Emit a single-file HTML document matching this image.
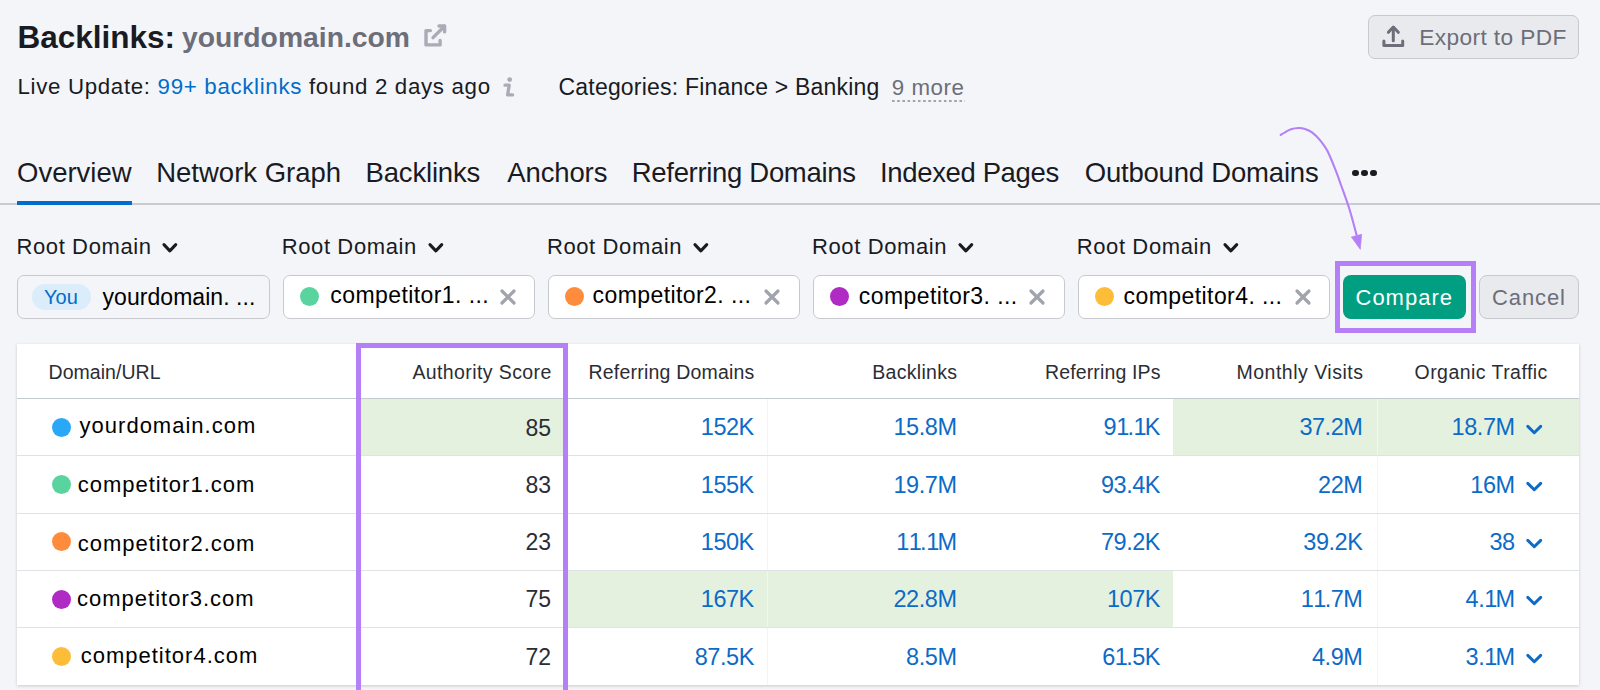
<!DOCTYPE html>
<html><head><meta charset="utf-8"><style>
html,body{margin:0;padding:0}
body{width:1600px;height:690px;overflow:hidden;position:relative;background:#f4f5f9;font-family:"Liberation Sans",sans-serif}
.t{position:absolute;line-height:1;white-space:nowrap}
</style></head><body>
<div class="t" style="left:17.50px;top:22.23px;font-size:31.5px;color:#191b23;font-weight:700;letter-spacing:0px;">Backlinks:</div>
<div class="t" style="left:182.00px;top:23.14px;font-size:28.3px;color:#6c6e79;font-weight:700;letter-spacing:0px;">yourdomain.com</div>
<svg style="position:absolute;left:424px;top:24px;overflow:visible" width="24" height="24" viewBox="0 0 24 24"><g fill="none" stroke="#a9abb6" stroke-width="3.4" stroke-linecap="round" stroke-linejoin="round"><path d="M6.4 6.6H2V20.9H16.1V16.5"/><path d="M9 13.6L20.4 2.2"/><path d="M15 2H20.6V7.9"/></g></svg>
<div class="t" style="left:17.50px;top:76.42px;font-size:22.3px;color:#191b23;font-weight:400;letter-spacing:0.67px;">Live Update: <span style="color:#006dca">99+ backlinks</span> found 2 days ago</div>
<svg style="position:absolute;left:500px;top:76px;overflow:visible" width="16" height="22" viewBox="0 0 16 22"><circle cx="9.7" cy="3.6" r="2.4" fill="#a9abb6"/><path d="M5 9.2H9.2L7.6 18.9H12.6" fill="none" stroke="#a9abb6" stroke-width="3.3" stroke-linecap="round" stroke-linejoin="round"/></svg>
<div class="t" style="left:558.50px;top:76.23px;font-size:23px;color:#191b23;font-weight:400;letter-spacing:0.2px;">Categories: Finance &gt; Banking</div>
<div class="t" style="left:891.80px;top:76.82px;font-size:22.3px;color:#6c6e79;font-weight:400;letter-spacing:0.55px;">9 more</div>
<div style="position:absolute;left:892px;top:100px;width:73px;height:1.5999999999999943px;background-image:linear-gradient(90deg,#6c6e79 48%,transparent 48%);background-size:5.2px 1.6px;background-repeat:repeat-x;opacity:.6"></div>
<div style="position:absolute;left:1368px;top:14.5px;width:211px;height:44.5px;box-sizing:border-box;border:1px solid #c7c9cf;border-radius:7px;background:#e9eaee"></div>
<svg style="position:absolute;left:1380px;top:22px;overflow:visible" width="26" height="26" viewBox="0 0 26 26"><g fill="none" stroke="#6c6e79" stroke-width="3" stroke-linecap="round" stroke-linejoin="round"><path d="M3.9 19V23.4H22.7V19"/><path d="M13.3 18.8V5.5"/><path d="M8.4 10.3L13.3 5L18.3 10.3"/></g></svg>
<div class="t" style="left:1419.30px;top:26.18px;font-size:22.7px;color:#6c6e79;font-weight:400;letter-spacing:0.38px;">Export to PDF</div>
<div class="t" style="left:17.00px;top:159.12px;font-size:27.5px;color:#191b23;font-weight:400;letter-spacing:0px;">Overview</div>
<div class="t" style="left:156.20px;top:159.12px;font-size:27.5px;color:#191b23;font-weight:400;letter-spacing:0px;">Network Graph</div>
<div class="t" style="left:365.60px;top:159.12px;font-size:27.5px;color:#191b23;font-weight:400;letter-spacing:-0.18px;">Backlinks</div>
<div class="t" style="left:507.30px;top:159.12px;font-size:27.5px;color:#191b23;font-weight:400;letter-spacing:-0.13px;">Anchors</div>
<div class="t" style="left:631.80px;top:159.12px;font-size:27.5px;color:#191b23;font-weight:400;letter-spacing:-0.32px;">Referring Domains</div>
<div class="t" style="left:880.10px;top:159.12px;font-size:27.5px;color:#191b23;font-weight:400;letter-spacing:-0.37px;">Indexed Pages</div>
<div class="t" style="left:1084.70px;top:159.12px;font-size:27.5px;color:#191b23;font-weight:400;letter-spacing:-0.2px;">Outbound Domains</div>
<div style="position:absolute;left:1352.3px;top:169.70000000000002px;width:6.4px;height:6.4px;border-radius:50%;background:#191b23"></div>
<div style="position:absolute;left:1361.3px;top:169.70000000000002px;width:6.4px;height:6.4px;border-radius:50%;background:#191b23"></div>
<div style="position:absolute;left:1370.3px;top:169.70000000000002px;width:6.4px;height:6.4px;border-radius:50%;background:#191b23"></div>
<div style="position:absolute;left:0px;top:203px;width:1600px;height:2px;background:#c9cbd1"></div>
<div style="position:absolute;left:17px;top:201px;width:115px;height:4px;background:#006dca"></div>
<div class="t" style="left:16.45px;top:236.07px;font-size:22px;color:#191b23;font-weight:400;letter-spacing:0.62px;">Root Domain</div>
<svg style="position:absolute;left:162.25px;top:240px;overflow:visible" width="16" height="14" viewBox="0 0 16 14"><path d="M1.95 4.6L7.85 10.9L13.75 4.6" fill="none" stroke="#191b23" stroke-width="3" stroke-linecap="round" stroke-linejoin="round"/></svg>
<div class="t" style="left:281.70px;top:236.07px;font-size:22px;color:#191b23;font-weight:400;letter-spacing:0.62px;">Root Domain</div>
<svg style="position:absolute;left:427.5px;top:240px;overflow:visible" width="16" height="14" viewBox="0 0 16 14"><path d="M1.95 4.6L7.85 10.9L13.75 4.6" fill="none" stroke="#191b23" stroke-width="3" stroke-linecap="round" stroke-linejoin="round"/></svg>
<div class="t" style="left:546.90px;top:236.07px;font-size:22px;color:#191b23;font-weight:400;letter-spacing:0.62px;">Root Domain</div>
<svg style="position:absolute;left:692.7px;top:240px;overflow:visible" width="16" height="14" viewBox="0 0 16 14"><path d="M1.95 4.6L7.85 10.9L13.75 4.6" fill="none" stroke="#191b23" stroke-width="3" stroke-linecap="round" stroke-linejoin="round"/></svg>
<div class="t" style="left:812.00px;top:236.07px;font-size:22px;color:#191b23;font-weight:400;letter-spacing:0.62px;">Root Domain</div>
<svg style="position:absolute;left:957.8px;top:240px;overflow:visible" width="16" height="14" viewBox="0 0 16 14"><path d="M1.95 4.6L7.85 10.9L13.75 4.6" fill="none" stroke="#191b23" stroke-width="3" stroke-linecap="round" stroke-linejoin="round"/></svg>
<div class="t" style="left:1076.70px;top:236.07px;font-size:22px;color:#191b23;font-weight:400;letter-spacing:0.62px;">Root Domain</div>
<svg style="position:absolute;left:1222.5px;top:240px;overflow:visible" width="16" height="14" viewBox="0 0 16 14"><path d="M1.95 4.6L7.85 10.9L13.75 4.6" fill="none" stroke="#191b23" stroke-width="3" stroke-linecap="round" stroke-linejoin="round"/></svg>
<div style="position:absolute;left:17.25px;top:275px;width:252.35000000000002px;height:43.5px;box-sizing:border-box;border:1px solid #c7c9cf;border-radius:7px;background:#f4f5f9"></div>
<div style="position:absolute;left:32px;top:284.2px;width:59px;height:25.400000000000034px;border-radius:13px;background:#dbecfb"></div>
<div class="t" style="left:44.00px;top:287.32px;font-size:20px;color:#006dca;font-weight:400;letter-spacing:0px;">You</div>
<div class="t" style="left:102.50px;top:286.23px;font-size:23px;color:#000;font-weight:400;letter-spacing:0.05px;">yourdomain. ...</div>
<div style="position:absolute;left:282.5px;top:275px;width:252.5px;height:43.5px;box-sizing:border-box;border:1px solid #c7c9cf;border-radius:7px;background:#fff"></div>
<div style="position:absolute;left:299.9px;top:287.4px;width:19.100000000000023px;height:19.100000000000023px;border-radius:50%;background:#5ad49e"></div>
<div class="t" style="left:330.30px;top:283.83px;font-size:23px;color:#000;font-weight:400;letter-spacing:0.42px;">competitor1. ...</div>
<svg style="position:absolute;left:500px;top:289px;overflow:visible" width="16" height="16" viewBox="0 0 16 16"><path d="M2 2L14 14M14 2L2 14" stroke="#a1a3ad" stroke-width="3.2" stroke-linecap="round"/></svg>
<div style="position:absolute;left:547.7px;top:275px;width:252.5px;height:43.5px;box-sizing:border-box;border:1px solid #c7c9cf;border-radius:7px;background:#fff"></div>
<div style="position:absolute;left:564.7px;top:287.4px;width:19.100000000000023px;height:19.100000000000023px;border-radius:50%;background:#ff8b3d"></div>
<div class="t" style="left:592.50px;top:283.83px;font-size:23px;color:#000;font-weight:400;letter-spacing:0.42px;">competitor2. ...</div>
<svg style="position:absolute;left:764.4px;top:289px;overflow:visible" width="16" height="16" viewBox="0 0 16 16"><path d="M2 2L14 14M14 2L2 14" stroke="#a1a3ad" stroke-width="3.2" stroke-linecap="round"/></svg>
<div style="position:absolute;left:812.8px;top:275px;width:252.5px;height:43.5px;box-sizing:border-box;border:1px solid #c7c9cf;border-radius:7px;background:#fff"></div>
<div style="position:absolute;left:829.6px;top:287.4px;width:19.100000000000023px;height:19.100000000000023px;border-radius:50%;background:#b02ac4"></div>
<div class="t" style="left:858.80px;top:285.13px;font-size:23px;color:#000;font-weight:400;letter-spacing:0.42px;">competitor3. ...</div>
<svg style="position:absolute;left:1029.3px;top:289px;overflow:visible" width="16" height="16" viewBox="0 0 16 16"><path d="M2 2L14 14M14 2L2 14" stroke="#a1a3ad" stroke-width="3.2" stroke-linecap="round"/></svg>
<div style="position:absolute;left:1077.5px;top:275px;width:252.5px;height:43.5px;box-sizing:border-box;border:1px solid #c7c9cf;border-radius:7px;background:#fff"></div>
<div style="position:absolute;left:1094.6px;top:287.4px;width:19.09999999999991px;height:19.100000000000023px;border-radius:50%;background:#fdbd38"></div>
<div class="t" style="left:1123.60px;top:284.83px;font-size:23px;color:#000;font-weight:400;letter-spacing:0.42px;">competitor4. ...</div>
<svg style="position:absolute;left:1294.8px;top:289px;overflow:visible" width="16" height="16" viewBox="0 0 16 16"><path d="M2 2L14 14M14 2L2 14" stroke="#a1a3ad" stroke-width="3.2" stroke-linecap="round"/></svg>
<div style="position:absolute;left:1342.5px;top:275px;width:123.5px;height:44px;border-radius:8px;background:#009f81"></div>
<div class="t" style="left:1355.50px;top:286.67px;font-size:22px;color:#fff;font-weight:400;letter-spacing:1.0px;">Compare</div>
<div style="position:absolute;left:1478.7px;top:275px;width:100.29999999999995px;height:44px;box-sizing:border-box;border:1px solid #c7c9cf;border-radius:8px;background:#e9eaee"></div>
<div class="t" style="left:1492.00px;top:286.67px;font-size:22px;color:#6c6e79;font-weight:400;letter-spacing:0.9px;">Cancel</div>
<div style="position:absolute;left:1334.9px;top:260.9px;width:141.19999999999982px;height:71.70000000000005px;box-sizing:border-box;border:5px solid #b57ff7"></div>
<svg style="position:absolute;left:1270px;top:120px;overflow:visible" width="100" height="140" viewBox="0 0 100 140"><path d="M10.65 15.00C11.38 14.55 13.28 13.25 15.00 12.30C16.72 11.35 18.75 10.02 21.00 9.30C23.25 8.58 26.17 8.07 28.50 8.00C30.83 7.93 32.75 8.17 35.00 8.90C37.25 9.63 39.47 10.50 42.00 12.40C44.53 14.30 47.67 17.27 50.20 20.30C52.73 23.33 54.73 25.87 57.20 30.60C59.67 35.33 62.70 42.97 65.00 48.70C67.30 54.43 68.55 58.12 71.00 65.00C73.45 71.88 77.07 81.50 79.70 90.00C82.33 98.50 85.62 111.67 86.80 116.00" fill="none" stroke="#b57ff7" stroke-width="2.1" stroke-linecap="round"/><path d="M81.3 117L91.7 114.3L90.3 129.4Z" fill="#b57ff7" stroke="#b57ff7" stroke-width="0.6" stroke-linejoin="round"/></svg>
<div style="position:absolute;left:17px;top:344px;width:1562px;height:341px;background:#fff;box-shadow:0 1px 3px rgba(0,0,0,.18)"></div>
<div style="position:absolute;left:357px;top:398.5px;width:211px;height:57.0px;background:#e4f1df"></div>
<div style="position:absolute;left:1173px;top:398.5px;width:406px;height:57.0px;background:#e4f1df"></div>
<div style="position:absolute;left:568px;top:570px;width:605px;height:57.299999999999955px;background:#e4f1df"></div>
<div style="position:absolute;left:767px;top:398.5px;width:1px;height:286.5px;background:#f3f4f5"></div>
<div style="position:absolute;left:1376.5px;top:398.5px;width:1.0px;height:286.5px;background:#f3f4f5"></div>
<div style="position:absolute;left:17px;top:397.5px;width:1562px;height:1.5px;background:#c3cbcf"></div>
<div style="position:absolute;left:17px;top:455px;width:1562px;height:1.3000000000000114px;background:#dfe3e6"></div>
<div style="position:absolute;left:17px;top:512.5px;width:1562px;height:1.2999999999999545px;background:#dfe3e6"></div>
<div style="position:absolute;left:17px;top:570px;width:1562px;height:1.2999999999999545px;background:#dfe3e6"></div>
<div style="position:absolute;left:17px;top:627px;width:1562px;height:1.2999999999999545px;background:#dfe3e6"></div>
<div class="t" style="left:48.50px;top:362.99px;font-size:19.5px;color:#2b2d35;font-weight:400;letter-spacing:0.05px;">Domain/URL</div>
<div class="t" style="right:1048.30px;top:362.99px;font-size:19.5px;color:#2b2d35;font-weight:400;letter-spacing:0.4px;text-align:right;">Authority Score</div>
<div class="t" style="right:845.50px;top:362.99px;font-size:19.5px;color:#2b2d35;font-weight:400;letter-spacing:0.2px;text-align:right;">Referring Domains</div>
<div class="t" style="right:642.70px;top:362.99px;font-size:19.5px;color:#2b2d35;font-weight:400;letter-spacing:0.3px;text-align:right;">Backlinks</div>
<div class="t" style="right:439.35px;top:362.99px;font-size:19.5px;color:#2b2d35;font-weight:400;letter-spacing:0.15px;text-align:right;">Referring IPs</div>
<div class="t" style="right:236.60px;top:362.99px;font-size:19.5px;color:#2b2d35;font-weight:400;letter-spacing:0.5px;text-align:right;">Monthly Visits</div>
<div class="t" style="right:52.25px;top:362.99px;font-size:19.5px;color:#2b2d35;font-weight:400;letter-spacing:0.45px;text-align:right;">Organic Traffic</div>
<div style="position:absolute;left:51.8px;top:417.9px;width:19.400000000000006px;height:19.200000000000045px;border-radius:50%;background:#2aa8f8"></div>
<div class="t" style="left:79.60px;top:415.27px;font-size:22px;color:#000;font-weight:400;letter-spacing:1.0px;">yourdomain.com</div>
<div class="t" style="right:1049.00px;top:416.53px;font-size:23px;color:#2b2d35;font-weight:400;letter-spacing:0px;text-align:right;">85</div>
<div class="t" style="right:846.15px;top:416.40px;font-size:23.5px;color:#0d6bc7;font-weight:400;letter-spacing:-0.45px;text-align:right;">152K</div>
<div class="t" style="right:643.45px;top:416.40px;font-size:23.5px;color:#0d6bc7;font-weight:400;letter-spacing:-0.45px;text-align:right;">15.8M</div>
<div class="t" style="right:439.95px;top:416.40px;font-size:23.5px;color:#0d6bc7;font-weight:400;letter-spacing:-0.45px;text-align:right;">9<span style="letter-spacing:-1.8px">1</span>.<span style="letter-spacing:-1.8px">1</span>K</div>
<div class="t" style="right:237.55px;top:416.40px;font-size:23.5px;color:#0d6bc7;font-weight:400;letter-spacing:-0.45px;text-align:right;">37.2M</div>
<div class="t" style="right:85.35px;top:416.40px;font-size:23.5px;color:#0d6bc7;font-weight:400;letter-spacing:-0.45px;text-align:right;">18.7M</div>
<svg style="position:absolute;left:1526px;top:423.5px;overflow:visible" width="17" height="12" viewBox="0 0 17 12"><path d="M1.8 2.4L8.25 8.7L14.7 2.4" fill="none" stroke="#0d6bc7" stroke-width="3" stroke-linecap="round" stroke-linejoin="round"/></svg>
<div style="position:absolute;left:51.8px;top:475.29999999999995px;width:19.400000000000006px;height:19.200000000000045px;border-radius:50%;background:#5ad49e"></div>
<div class="t" style="left:77.70px;top:474.27px;font-size:22px;color:#000;font-weight:400;letter-spacing:1.0px;">competitor1.com</div>
<div class="t" style="right:1049.00px;top:473.83px;font-size:23px;color:#2b2d35;font-weight:400;letter-spacing:0px;text-align:right;">83</div>
<div class="t" style="right:846.15px;top:473.70px;font-size:23.5px;color:#0d6bc7;font-weight:400;letter-spacing:-0.45px;text-align:right;">155K</div>
<div class="t" style="right:643.45px;top:473.70px;font-size:23.5px;color:#0d6bc7;font-weight:400;letter-spacing:-0.45px;text-align:right;">19.7M</div>
<div class="t" style="right:439.95px;top:473.70px;font-size:23.5px;color:#0d6bc7;font-weight:400;letter-spacing:-0.45px;text-align:right;">93.4K</div>
<div class="t" style="right:237.55px;top:473.70px;font-size:23.5px;color:#0d6bc7;font-weight:400;letter-spacing:-0.45px;text-align:right;">22M</div>
<div class="t" style="right:85.35px;top:473.70px;font-size:23.5px;color:#0d6bc7;font-weight:400;letter-spacing:-0.45px;text-align:right;">16M</div>
<svg style="position:absolute;left:1526px;top:480.8px;overflow:visible" width="17" height="12" viewBox="0 0 17 12"><path d="M1.8 2.4L8.25 8.7L14.7 2.4" fill="none" stroke="#0d6bc7" stroke-width="3" stroke-linecap="round" stroke-linejoin="round"/></svg>
<div style="position:absolute;left:51.8px;top:532.1999999999999px;width:19.400000000000006px;height:19.200000000000045px;border-radius:50%;background:#ff8b3d"></div>
<div class="t" style="left:77.70px;top:532.87px;font-size:22px;color:#000;font-weight:400;letter-spacing:1.0px;">competitor2.com</div>
<div class="t" style="right:1049.00px;top:531.43px;font-size:23px;color:#2b2d35;font-weight:400;letter-spacing:0px;text-align:right;">23</div>
<div class="t" style="right:846.15px;top:531.30px;font-size:23.5px;color:#0d6bc7;font-weight:400;letter-spacing:-0.45px;text-align:right;">150K</div>
<div class="t" style="right:643.45px;top:531.30px;font-size:23.5px;color:#0d6bc7;font-weight:400;letter-spacing:-0.45px;text-align:right;">1<span style="letter-spacing:-1.8px">1</span>.<span style="letter-spacing:-1.8px">1</span>M</div>
<div class="t" style="right:439.95px;top:531.30px;font-size:23.5px;color:#0d6bc7;font-weight:400;letter-spacing:-0.45px;text-align:right;">79.2K</div>
<div class="t" style="right:237.55px;top:531.30px;font-size:23.5px;color:#0d6bc7;font-weight:400;letter-spacing:-0.45px;text-align:right;">39.2K</div>
<div class="t" style="right:85.35px;top:531.30px;font-size:23.5px;color:#0d6bc7;font-weight:400;letter-spacing:-0.45px;text-align:right;">38</div>
<svg style="position:absolute;left:1526px;top:538.4px;overflow:visible" width="17" height="12" viewBox="0 0 17 12"><path d="M1.8 2.4L8.25 8.7L14.7 2.4" fill="none" stroke="#0d6bc7" stroke-width="3" stroke-linecap="round" stroke-linejoin="round"/></svg>
<div style="position:absolute;left:51.8px;top:589.8px;width:19.400000000000006px;height:19.200000000000045px;border-radius:50%;background:#b02ac4"></div>
<div class="t" style="left:77.00px;top:587.97px;font-size:22px;color:#000;font-weight:400;letter-spacing:1.0px;">competitor3.com</div>
<div class="t" style="right:1049.00px;top:587.63px;font-size:23px;color:#2b2d35;font-weight:400;letter-spacing:0px;text-align:right;">75</div>
<div class="t" style="right:846.15px;top:587.50px;font-size:23.5px;color:#0d6bc7;font-weight:400;letter-spacing:-0.45px;text-align:right;">167K</div>
<div class="t" style="right:643.45px;top:587.50px;font-size:23.5px;color:#0d6bc7;font-weight:400;letter-spacing:-0.45px;text-align:right;">22.8M</div>
<div class="t" style="right:439.95px;top:587.50px;font-size:23.5px;color:#0d6bc7;font-weight:400;letter-spacing:-0.45px;text-align:right;">107K</div>
<div class="t" style="right:237.55px;top:587.50px;font-size:23.5px;color:#0d6bc7;font-weight:400;letter-spacing:-0.45px;text-align:right;">1<span style="letter-spacing:-1.8px">1</span>.7M</div>
<div class="t" style="right:85.35px;top:587.50px;font-size:23.5px;color:#0d6bc7;font-weight:400;letter-spacing:-0.45px;text-align:right;">4.<span style="letter-spacing:-1.8px">1</span>M</div>
<svg style="position:absolute;left:1526px;top:594.6px;overflow:visible" width="17" height="12" viewBox="0 0 17 12"><path d="M1.8 2.4L8.25 8.7L14.7 2.4" fill="none" stroke="#0d6bc7" stroke-width="3" stroke-linecap="round" stroke-linejoin="round"/></svg>
<div style="position:absolute;left:51.8px;top:646.8px;width:19.400000000000006px;height:19.200000000000045px;border-radius:50%;background:#fdbd38"></div>
<div class="t" style="left:80.70px;top:645.27px;font-size:22px;color:#000;font-weight:400;letter-spacing:1.0px;">competitor4.com</div>
<div class="t" style="right:1049.00px;top:645.73px;font-size:23px;color:#2b2d35;font-weight:400;letter-spacing:0px;text-align:right;">72</div>
<div class="t" style="right:846.15px;top:645.60px;font-size:23.5px;color:#0d6bc7;font-weight:400;letter-spacing:-0.45px;text-align:right;">87.5K</div>
<div class="t" style="right:643.45px;top:645.60px;font-size:23.5px;color:#0d6bc7;font-weight:400;letter-spacing:-0.45px;text-align:right;">8.5M</div>
<div class="t" style="right:439.95px;top:645.60px;font-size:23.5px;color:#0d6bc7;font-weight:400;letter-spacing:-0.45px;text-align:right;">6<span style="letter-spacing:-1.8px">1</span>.5K</div>
<div class="t" style="right:237.55px;top:645.60px;font-size:23.5px;color:#0d6bc7;font-weight:400;letter-spacing:-0.45px;text-align:right;">4.9M</div>
<div class="t" style="right:85.35px;top:645.60px;font-size:23.5px;color:#0d6bc7;font-weight:400;letter-spacing:-0.45px;text-align:right;">3.<span style="letter-spacing:-1.8px">1</span>M</div>
<svg style="position:absolute;left:1526px;top:652.7px;overflow:visible" width="17" height="12" viewBox="0 0 17 12"><path d="M1.8 2.4L8.25 8.7L14.7 2.4" fill="none" stroke="#0d6bc7" stroke-width="3" stroke-linecap="round" stroke-linejoin="round"/></svg>
<div style="position:absolute;left:356px;top:343.2px;width:212px;height:356.8px;box-sizing:border-box;border:5px solid #b57ff7"></div>
</body></html>
